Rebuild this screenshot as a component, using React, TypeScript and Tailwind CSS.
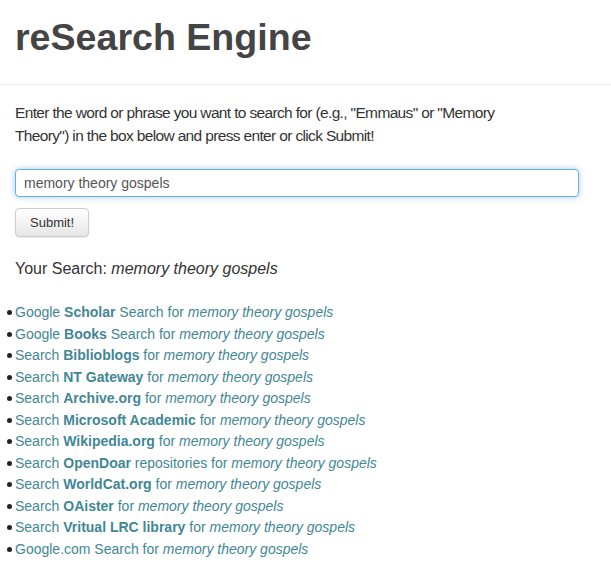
import React, { useState } from 'react';

const sources: { pre: string; bold?: string; post: string }[] = [
  { pre: 'Google ', bold: 'Scholar', post: ' Search for ' },
  { pre: 'Google ', bold: 'Books', post: ' Search for ' },
  { pre: 'Search ', bold: 'Biblioblogs', post: ' for ' },
  { pre: 'Search ', bold: 'NT Gateway', post: ' for ' },
  { pre: 'Search ', bold: 'Archive.org', post: ' for ' },
  { pre: 'Search ', bold: 'Microsoft Academic', post: ' for ' },
  { pre: 'Search ', bold: 'Wikipedia.org', post: ' for ' },
  { pre: 'Search ', bold: 'OpenDoar', post: ' repositories for ' },
  { pre: 'Search ', bold: 'WorldCat.org', post: ' for ' },
  { pre: 'Search ', bold: 'OAister', post: ' for ' },
  { pre: 'Search ', bold: 'Vritual LRC library', post: ' for ' },
  { pre: 'Google.com Search for ', post: '' },
];

const App: React.FC = () => {
  const [query, setQuery] = useState('memory theory gospels');

  return (
    <div className="min-h-screen bg-white text-[#333] font-['Liberation_Sans',Arial,sans-serif]">
      <header className="px-[15px] pt-[13px] pb-[23px] border-b border-[#eee]">
        <h1 className="text-[37.6px] font-bold leading-[48px] text-[#444]">reSearch Engine</h1>
      </header>

      <main className="px-[15px] pt-[16px]">
        <p className="text-[15.5px] tracking-[-0.65px] leading-[23px] max-w-[500px]">
          Enter the word or phrase you want to search for (e.g., "Emmaus" or "Memory Theory") in the box below and press enter or click Submit!
        </p>

        <form className="mt-[22px]" onSubmit={(e) => e.preventDefault()}>
          <input
            className="block w-[564px] h-[28px] px-[8px] text-[14px] text-[#555] bg-white rounded-[4px] border border-[#66afe9] shadow-[0_0_6px_rgba(102,175,233,0.6)] outline-none"
            value={query}
            onChange={(e) => setQuery(e.target.value)}
          />
          <button
            type="submit"
            className="mt-[11px] h-[29px] px-[14px] text-[13px] text-[#333] rounded-[4px] border border-[#ccc] bg-gradient-to-b from-white to-[#e6e6e6] shadow-[0_1px_1px_rgba(0,0,0,0.08)]"
          >
            Submit!
          </button>
        </form>

        <p className="mt-[20px] text-[16px] leading-[24px]">
          Your Search: <em>{query}</em>
        </p>

        <ul className="mt-[21px] -ml-[8px] text-[14px] leading-[21.5px] text-[#3f8796]">
          {sources.map((s, idx) => (
            <li key={idx} className="flex items-center">
              <span className="w-[8px] flex justify-start">
                <span className="block w-[5px] h-[5px] rounded-full bg-[#222]" />
              </span>
              <a href="#" className="text-[#3f8796]">
                {s.pre}
                {s.bold && <strong className="font-bold">{s.bold}</strong>}
                {s.post}
                <em>{query}</em>
              </a>
            </li>
          ))}
        </ul>
      </main>
    </div>
  );
};

export default App;
